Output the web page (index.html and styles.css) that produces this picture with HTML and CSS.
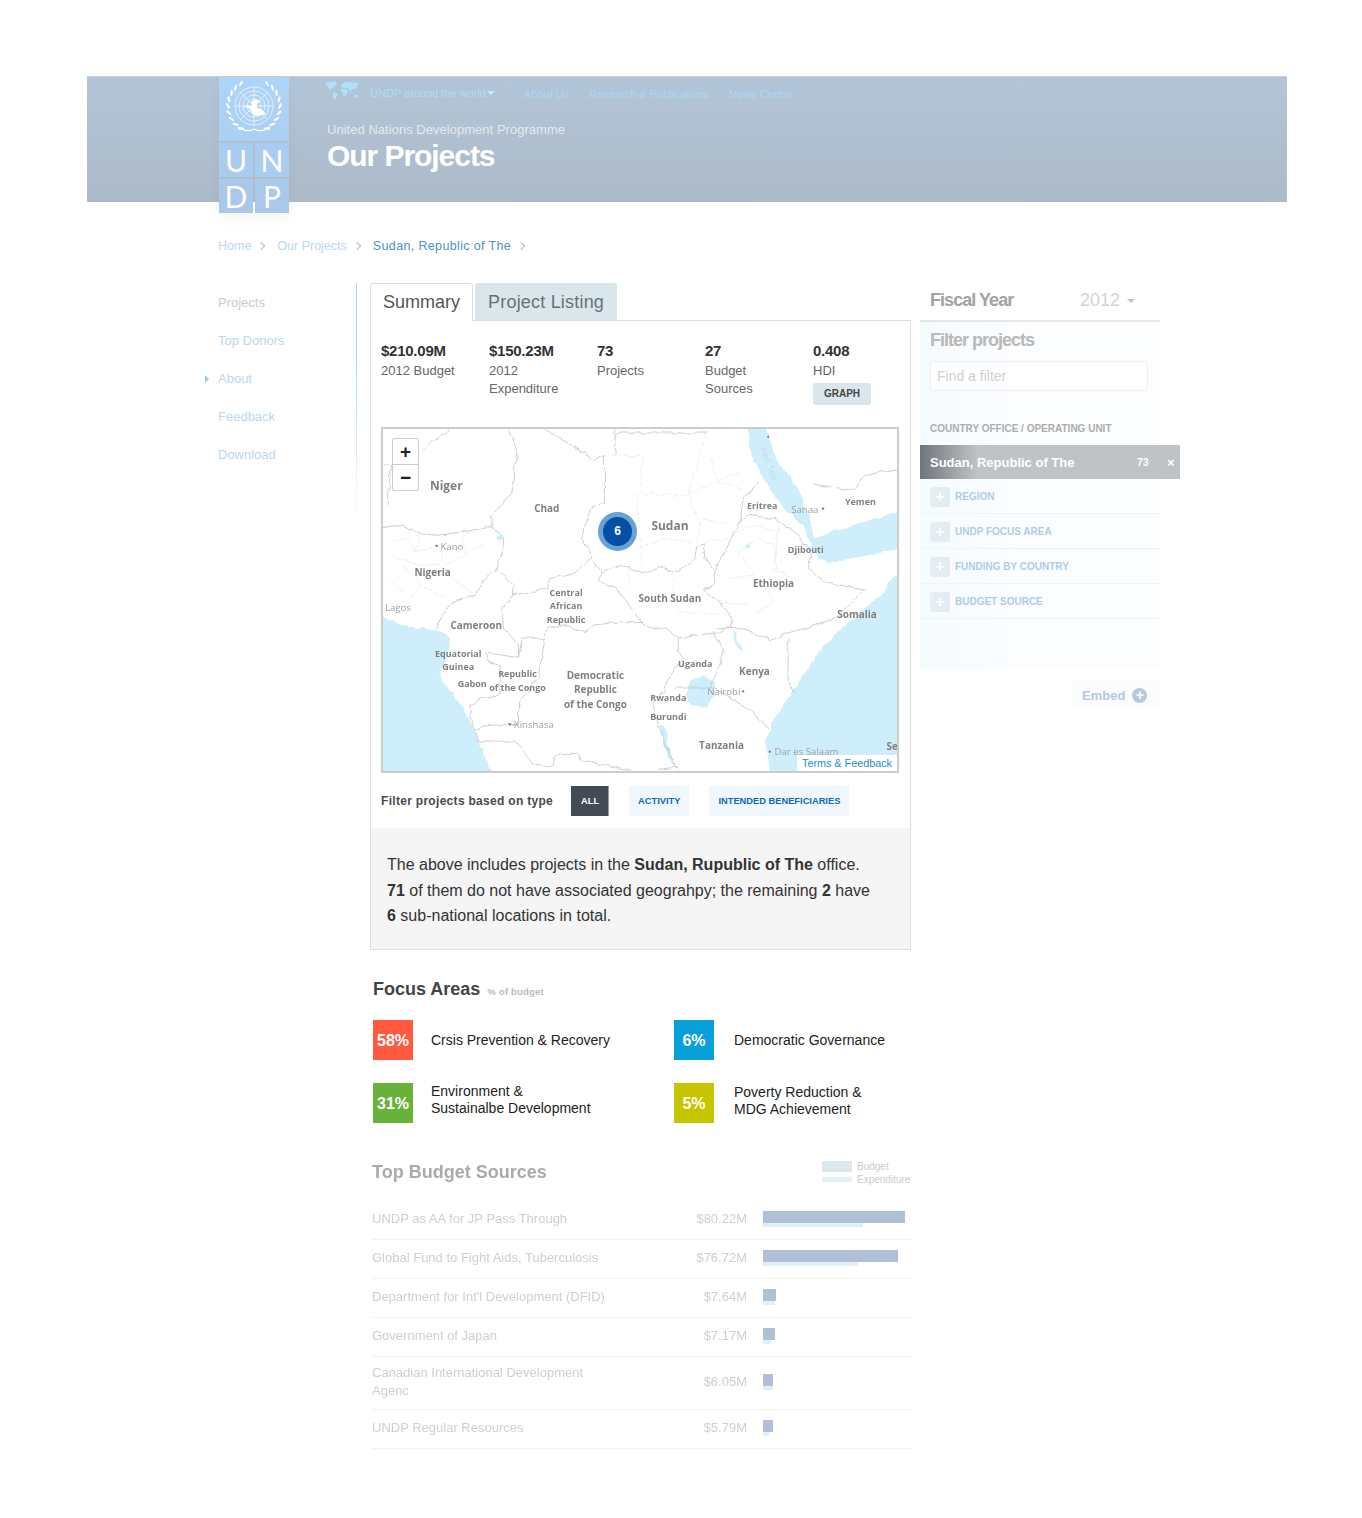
FILE: index.html
```html
<!DOCTYPE html>
<html lang="en">
<head>
<meta charset="utf-8">
<title>Our Projects</title>
<link rel="stylesheet" href="styles.css">
</head>
<body>
<div class="page">
<header class="site-header">
  <div class="logo">
    <div class="logo-emblem">
      <svg width="70" height="64" viewBox="0 0 70 64" fill="none" stroke="#fff">
        <g stroke-width=".75" opacity=".85">
          <circle cx="35" cy="29" r="19"/><circle cx="35" cy="29" r="15"/><circle cx="35" cy="29" r="11"/><circle cx="35" cy="29" r="7"/>
          <path d="M35 10V48M16 29H54M21.5 15.5L48.5 42.5M48.5 15.5L21.5 42.5"/>
        </g>
        <path d="M22 33L27 30L31 32L34 38L40 39L47 37L42 32L38 31L38 27L42 24L36 22L32 25L33 29L28 28Z" fill="#fff" stroke="none"/>
        <g fill="#fff" stroke="none">
          <ellipse cx="35" cy="3" rx="3.2" ry="1.2" transform="rotate(-150 35 29) rotate(-28 35 3)"/>
          <ellipse cx="35" cy="3" rx="3.2" ry="1.2" transform="rotate(-135 35 29) rotate(-28 35 3)"/>
          <ellipse cx="35" cy="3" rx="3.2" ry="1.2" transform="rotate(-120 35 29) rotate(-28 35 3)"/>
          <ellipse cx="35" cy="3" rx="3.2" ry="1.2" transform="rotate(-105 35 29) rotate(-28 35 3)"/>
          <ellipse cx="35" cy="3" rx="3.2" ry="1.2" transform="rotate(-90 35 29) rotate(-28 35 3)"/>
          <ellipse cx="35" cy="3" rx="3.2" ry="1.2" transform="rotate(-75 35 29) rotate(-28 35 3)"/>
          <ellipse cx="35" cy="3" rx="3.2" ry="1.2" transform="rotate(-60 35 29) rotate(-28 35 3)"/>
          <ellipse cx="35" cy="3" rx="3.2" ry="1.2" transform="rotate(-45 35 29) rotate(-28 35 3)"/>
          <ellipse cx="35" cy="3" rx="3" ry="1.1" transform="rotate(-30 35 29) rotate(-28 35 3)"/>
          <ellipse cx="35" cy="3" rx="3.2" ry="1.2" transform="rotate(150 35 29) rotate(28 35 3)"/>
          <ellipse cx="35" cy="3" rx="3.2" ry="1.2" transform="rotate(135 35 29) rotate(28 35 3)"/>
          <ellipse cx="35" cy="3" rx="3.2" ry="1.2" transform="rotate(120 35 29) rotate(28 35 3)"/>
          <ellipse cx="35" cy="3" rx="3.2" ry="1.2" transform="rotate(105 35 29) rotate(28 35 3)"/>
          <ellipse cx="35" cy="3" rx="3.2" ry="1.2" transform="rotate(90 35 29) rotate(28 35 3)"/>
          <ellipse cx="35" cy="3" rx="3.2" ry="1.2" transform="rotate(75 35 29) rotate(28 35 3)"/>
          <ellipse cx="35" cy="3" rx="3.2" ry="1.2" transform="rotate(60 35 29) rotate(28 35 3)"/>
          <ellipse cx="35" cy="3" rx="3.2" ry="1.2" transform="rotate(45 35 29) rotate(28 35 3)"/>
          <ellipse cx="35" cy="3" rx="3" ry="1.1" transform="rotate(30 35 29) rotate(28 35 3)"/>
        </g>
        <path d="M19 50Q28 56 35 52Q42 56 51 50" stroke-width="1.1"/>
      </svg>
    </div>
    <div class="logo-letters">
      <span class="logo-letter">U</span><span class="logo-letter">N</span><span class="logo-letter">D</span><span class="logo-letter">P</span>
    </div>
  </div>
  <div class="header-body">
    <nav class="top-nav">
      <svg class="world" width="34" height="20" viewBox="0 0 34 20" fill="#aee0f8">
        <path d="M0 2L10 0L12 3L8 7L5 8L6 11L3 6Z"/><path d="M8 11L13 13L10 19L8 18Z"/>
        <path d="M16 4L20 1L34 2L32 6L29 9L27 8L25 11L23 7L17 7Z"/><path d="M15 8L21 8L23 11L20 16L18 15L17 11Z"/>
        <path d="M29 14L33 14L32 17L29 16Z"/>
      </svg>
      <a class="nav-world">UNDP around the world<span class="nav-caret"></span></a>
      <a class="nav-link nav-first">About Us</a>
      <a class="nav-link">Research &amp; Publications</a>
      <a class="nav-link">News Centre</a>
    </nav>
    <div class="org-name">United Nations Development Programme</div>
    <h1 class="site-title">Our Projects</h1>
  </div>
</header>

<div class="breadcrumb">
  <a class="crumb">Home</a><span class="crumb-sep"></span>
  <a class="crumb">Our Projects</a><span class="crumb-sep"></span>
  <a class="crumb crumb-current">Sudan, Republic of The</a><span class="crumb-sep"></span>
</div>

<div class="layout">
  <aside class="side-nav">
    <a class="side-link side-gray">Projects</a>
    <a class="side-link">Top Donors</a>
    <a class="side-link side-arrow">About</a>
    <a class="side-link">Feedback</a>
    <a class="side-link">Download</a>
  </aside>

  <main class="main">
    <div class="tabs">
      <div class="tab tab-active">Summary</div>
      <div class="tab">Project Listing</div>
    </div>
    <section class="panel">
      <div class="stats">
        <div class="stat"><b>$210.09M</b><span>2012 Budget</span></div>
        <div class="stat"><b>$150.23M</b><span>2012<br>Expenditure</span></div>
        <div class="stat"><b>73</b><span>Projects</span></div>
        <div class="stat"><b>27</b><span>Budget<br>Sources</span></div>
        <div class="stat"><b>0.408</b><span>HDI</span><a class="graph-btn">GRAPH</a></div>
      </div>

      <div class="map">
        <svg class="map-svg" viewBox="3 10 1544 1030" preserveAspectRatio="none" fill="none">
          <defs>
            <filter id="wiggle" x="-5%" y="-5%" width="110%" height="110%">
              <feTurbulence type="fractalNoise" baseFrequency="0.035" numOctaves="2" seed="4" result="n"/>
              <feDisplacementMap in="SourceGraphic" in2="n" scale="16" xChannelSelector="R" yChannelSelector="G"/>
            </filter>
          </defs>
          <g fill="#cfeefc" filter="url(#wiggle)">
            <path d="M1560 425L1500 510L1440 560L1380 610L1320 670L1260 760L1225 810L1170 900L1150 960L1165 1050L1560 1050Z"/>
            <path d="M-10 570L60 600L110 610L160 610L205 640L195 700L170 760L230 830L270 900L290 950L330 1050L-10 1050Z"/>
            <path d="M1095 0L1150 0L1190 110L1250 190L1285 280L1300 340L1380 310L1480 280L1560 258L1560 370L1440 395L1340 412L1310 400L1290 365L1270 310L1200 240L1150 170L1110 90Z"/>
            <path d="M925 770L965 750L1000 770L1000 810L975 850L930 845L915 810Z"/>
            <path d="M1055 615L1065 625L1085 680L1070 670L1060 645Z"/>
            <path d="M835 905L850 905L860 960L880 1030L860 1000L845 950Z"/>
            <circle cx="1100" cy="362" r="9"/><circle cx="352" cy="335" r="8"/>
          </g>
          <g filter="url(#wiggle)">
            <g stroke="#e6e6e6" stroke-width="2" stroke-dasharray="14 5">
              <path d="M668 90L780 90L780 205L920 208L960 300L945 350"/>
              <path d="M765 205L782 420"/>
              <path d="M920 208L975 20"/>
              <path d="M1075 140L1000 170L925 205"/>
              <path d="M770 370L850 340L930 350"/>
              <path d="M735 430L745 490M870 440L880 510L960 540M890 560L1040 570"/>
            </g>
            <g stroke="#e9e9e9" stroke-width="2">
              <path d="M20 350L80 340L100 380L170 360L190 420L250 390L300 360M60 420L120 480L80 530M170 420L220 470L270 500M240 330L250 390M20 460L60 500M110 330L100 380M30 390L100 420L170 420M120 480L190 520"/>
              <path d="M1070 380L1130 340L1180 360L1190 440L1260 470M1040 460L1120 450L1180 530L1120 570M1190 290L1180 450M1010 530L1100 540M1060 320L1120 300L1190 320M1120 450L1070 380"/>
              <path d="M960 280L1040 300M985 100L1010 170L1085 190M970 350L1040 340"/>
            </g>
            <g stroke="#c2c2c2" stroke-width="2.4" stroke-linejoin="round">
              <path d="M120 70L205 10"/>
              <path d="M3 122L25 122L18 240"/>
              <path d="M380 10L405 75L390 200L330 270L330 305"/>
              <path d="M490 10L640 105L668 90L668 235L632 240L610 300L600 340L625 380L630 400L660 440L650 470L700 490L750 550L780 590"/>
              <path d="M700 10L700 88"/>
              <path d="M700 22L975 22"/>
              <path d="M3 310L60 300L110 325L170 330L240 320L330 305L360 330L365 375L345 430L300 470L280 510L210 530L175 580L165 610"/>
              <path d="M345 430L395 480L395 510L360 550L365 610L410 660L410 700"/>
              <path d="M395 510L500 490L505 460L570 445L630 400"/>
              <path d="M660 440L720 420L790 445L830 425L890 440L940 400L945 365L965 355L970 400L1000 440L995 480L965 490L1010 530L1050 580L1050 605L1000 610"/>
              <path d="M495 610L540 600L610 620L640 600L720 590L780 590L800 610L850 610L890 640L950 630L1000 625L1050 605"/>
              <path d="M890 640L890 680L905 700L855 770L850 800"/>
              <path d="M995 620L1025 680L1020 720L990 770L990 790"/>
              <path d="M880 790L1000 790L1110 860L1160 910"/>
              <path d="M1050 605L1100 620L1170 645L1220 625L1290 605L1370 575L1447 495"/>
              <path d="M1220 640L1220 770L1240 810"/>
              <path d="M1280 430L1330 470L1447 495"/>
              <path d="M1000 440L1050 340L1075 290L1085 220L1135 170"/>
              <path d="M1075 290L1100 270L1180 280L1240 320L1290 380L1280 430"/>
              <path d="M1295 175L1350 185L1420 195L1450 150L1547 130"/>
              <path d="M410 700L360 690L310 685"/>
              <path d="M420 640L490 640L495 610M420 640L410 700M490 640L470 750L440 800L410 830L410 900L360 900L300 905L280 920L290 950"/>
              <path d="M315 690L320 715L355 720L355 810L300 820L265 840L265 870L280 920"/>
              <path d="M290 950L400 950L460 1020L510 1025L520 990L590 990L600 1010L660 1020L750 1038"/>
              <path d="M850 800L810 830L830 900L850 960L890 1040"/>
              <path d="M830 1035L890 1028"/>
            </g>
          </g>
          <g class="map-places">
            <text x="1270" y="262">Sanaa</text><text x="210" y="375">Kano</text><text x="48" y="557">Lagos</text>
            <text x="1027" y="810">Nairobi</text><text x="456" y="910">Kinshasa</text><text x="1275" y="992">Dar es Salaam</text>
          </g>
          <g fill="#777"><circle cx="1325" cy="250" r="3.5"/><circle cx="164" cy="362" r="3.5"/><circle cx="1085" cy="800" r="3.5"/><circle cx="384" cy="900" r="3.5"/><circle cx="1165" cy="982" r="3.5"/><circle cx="1160" cy="33" r="3"/></g>
          <text class="map-sea" transform="translate(1135 70) rotate(68)">Red Sea</text>
          <g class="map-labels">
            <text class="lg" x="193" y="193">Niger</text><text class="md" x="495" y="260">Chad</text><text class="lg" x="865" y="315">Sudan</text>
            <text x="1142" y="250">Eritrea</text><text x="1437" y="240">Yemen</text><text x="1273" y="382">Djibouti</text>
            <text class="md" x="152" y="453">Nigeria</text><text class="md" x="1176" y="485">Ethiopia</text>
            <text x="553" y="512">Central</text><text x="553" y="553">African</text><text x="553" y="593">Republic</text>
            <text class="md" x="865" y="530">South Sudan</text><text class="md" x="283" y="611">Cameroon</text><text class="md" x="1427" y="578">Somalia</text>
            <text x="229" y="696">Equatorial</text><text x="229" y="736">Guinea</text>
            <text x="407" y="758">Republic</text><text x="407" y="799">of the Congo</text><text x="271" y="788">Gabon</text>
            <text class="md" x="641" y="763">Democratic</text><text class="md" x="641" y="806">Republic</text><text class="md" x="641" y="850">of the Congo</text>
            <text x="941" y="727">Uganda</text><text class="md" x="1119" y="750">Kenya</text><text x="860" y="830">Rwanda</text><text x="860" y="885">Burundi</text>
            <text class="md" x="1020" y="973">Tanzania</text><text class="md" x="1533" y="976">Se</text>
          </g>
        </svg>
        <div class="zoom-ctl"><span class="zoom-btn">+</span><span class="zoom-btn">−</span></div>
        <div class="cluster"><span class="cluster-core">6</span></div>
        <a class="map-terms">Terms &amp; Feedback</a>
      </div>

      <div class="type-filter">
        <span class="type-label">Filter projects based on type</span>
        <a class="type-btn type-active">ALL</a>
        <a class="type-btn">ACTIVITY</a>
        <a class="type-btn">INTENDED BENEFICIARIES</a>
      </div>

      <div class="note">
        The above includes projects in the <b>Sudan, Rupublic of The</b> office.<br>
        <b>71</b> of them do not have associated geograhpy; the remaining <b>2</b> have<br>
        <b>6</b> sub-national locations in total.
      </div>
    </section>

    <section class="focus">
      <h2 class="focus-title">Focus Areas <small>% of budget</small></h2>
      <div class="focus-grid">
        <div class="focus-item"><span class="tile tile-red">58%</span><span class="focus-name focus-one">Crsis Prevention &amp; Recovery</span></div>
        <div class="focus-item focus-right"><span class="tile tile-blue">6%</span><span class="focus-name">Democratic Governance</span></div>
        <div class="focus-item"><span class="tile tile-green">31%</span><span class="focus-name focus-two">Environment &amp;<br>Sustainalbe Development</span></div>
        <div class="focus-item focus-right"><span class="tile tile-yellow">5%</span><span class="focus-name focus-two">Poverty Reduction &amp;<br>MDG Achievement</span></div>
      </div>
    </section>

    <section class="sources">
      <div class="sources-head">
        <h2 class="sources-title">Top Budget Sources</h2>
        <div class="legend">
          <div class="legend-row"><span class="swatch swatch-budget"></span>Budget</div>
          <div class="legend-row"><span class="swatch swatch-exp"></span>Expenditure</div>
        </div>
      </div>
      <div class="source-row"><span class="source-name">UNDP as AA for JP Pass Through</span><span class="source-amt">$80.22M</span><span class="bars"><i class="bar-b" style="width:142px"></i><i class="bar-e" style="width:100px"></i></span></div>
      <div class="source-row"><span class="source-name">Global Fund to Fight Aids, Tuberculosis</span><span class="source-amt">$76.72M</span><span class="bars"><i class="bar-b" style="width:135px"></i><i class="bar-e" style="width:95px"></i></span></div>
      <div class="source-row"><span class="source-name">Department for Int'l Development (DFID)</span><span class="source-amt">$7.64M</span><span class="bars"><i class="bar-b" style="width:13px"></i><i class="bar-e" style="width:12px"></i></span></div>
      <div class="source-row"><span class="source-name">Government of Japan</span><span class="source-amt">$7.17M</span><span class="bars"><i class="bar-b" style="width:12px"></i><i class="bar-e" style="width:8px"></i></span></div>
      <div class="source-row source-tall"><span class="source-name">Canadian International Development Agenc</span><span class="source-amt">$6.05M</span><span class="bars"><i class="bar-b" style="width:10px"></i><i class="bar-e" style="width:10px"></i></span></div>
      <div class="source-row"><span class="source-name">UNDP Regular Resources</span><span class="source-amt">$5.79M</span><span class="bars"><i class="bar-b" style="width:10px"></i><i class="bar-e" style="width:6px"></i></span></div>
    </section>
  </main>

  <aside class="filters">
    <div class="fiscal"><span class="fiscal-label">Fiscal Year</span><span class="fiscal-year">2012</span><span class="fiscal-caret"></span></div>
    <div class="filter-panel">
      <h3 class="filter-title">Filter projects</h3>
      <div class="filter-input">Find a filter</div>
      <div class="filter-label">COUNTRY OFFICE / OPERATING UNIT</div>
      <div class="filter-selected"><span class="sel-name">Sudan, Republic of The</span><span class="sel-count">73</span><span class="sel-x">×</span></div>
      <div class="filter-row"><span class="plus">+</span>REGION</div>
      <div class="filter-row"><span class="plus">+</span>UNDP FOCUS AREA</div>
      <div class="filter-row"><span class="plus">+</span>FUNDING BY COUNTRY</div>
      <div class="filter-row"><span class="plus">+</span>BUDGET SOURCE</div>
    </div>
    <div class="embed-wrap"><a class="embed">Embed<span class="embed-plus">+</span></a></div>
  </aside>
</div>
</div>
</body>
</html>
```

FILE: styles.css
```css
* { box-sizing: border-box; }
html, body { margin: 0; padding: 0; background: #fff; }
body { font-family: "Liberation Sans", Arial, sans-serif; color: #333; }
h1, h2, h3 { margin: 0; }
a { text-decoration: none; }
.page { min-height: 1518px; padding-top: 76px; overflow: hidden; }

/* header */
.site-header {
  display: flex; width: 1200px; height: 126px; margin-left: 87px; padding-left: 132px;
  border-top: 1px solid #cfcfcf;
  background: linear-gradient(#b2c5d8, #adbac8);
}
.logo { width: 70px; height: 136px; flex: none; box-shadow: 0 6px 14px rgba(0,0,0,.04); position: relative; }
.logo-emblem { height: 64px; background: linear-gradient(#aed4f7, #abd0f3); }
.logo-letters { display: grid; grid-template-columns: 34px 34px; gap: 2px; margin-top: 2px; }
.logo-letter {
  height: 34px; background: #a9cdf0; color: #fff; text-align: center;
  font: 400 30px/35px Lato, sans-serif;
}
.logo-letter:nth-child(n+3) { background: #a9c8ea; }
.header-body { margin-left: 38px; flex: 1; }
.top-nav { display: flex; align-items: center; height: 30px; margin-top: 2px; font-size: 11px; }
.world { margin: -6px 11px 0 -2px; }
.nav-world { color: #aedcf4; margin-top: -3px; }
.nav-caret { display: inline-block; margin-left: 1px; vertical-align: 2px; border: 4px solid transparent; border-top-color: #cbe8f8; border-bottom: 0; }
.nav-link { color: #aad8f5; margin-left: 20px; }
.nav-first { margin-left: 29px; }
.org-name { margin-top: 13px; font-size: 13px; line-height: 16px; letter-spacing: .03px; color: #e4eaf0; }
.site-title { margin-top: 0; font-size: 30px; line-height: 36px; font-weight: 700; letter-spacing: -1.05px; color: #fff; }

/* breadcrumb */
.breadcrumb { display: flex; align-items: center; height: 16px; margin: 36px 0 0 218px; font-size: 12.5px; }
.crumb { color: #bbd6ee; }
.crumb-current { color: #4f90c8; letter-spacing: .36px; }
.crumb-sep { width: 6px; height: 6px; margin: 0 13px 0 7px; border-top: 1px solid #bbb; border-right: 1px solid #bbb; transform: rotate(45deg); }

/* layout */
.layout { display: flex; align-items: flex-start; margin: 29px 0 0 218px; }
.side-nav {
  flex: none; width: 139px; height: 237px; padding-top: 1px; font-size: 13px;
  border-right: 1px solid; border-image: linear-gradient(#a3d7fb 30%, #fff) 1;
}
.side-link { display: block; height: 38px; line-height: 37px; color: #bcd6ec; position: relative; }
.side-gray { color: #c3ccd6; }
.side-arrow::before { content: ""; position: absolute; left: -13px; top: 15px; border: 4px solid transparent; border-left-color: #a9c7e2; border-right: 0; }

.main { flex: none; width: 541px; margin-left: 13px; margin-right: 9px; }

/* tabs */
.tabs { display: flex; gap: 2px; height: 38px; margin-bottom: -1px; position: relative; }
.tab { height: 38px; padding: 0 13px; font-size: 18px; letter-spacing: .2px; line-height: 38px; color: #6a7074; background: #d9e7ec; border-radius: 3px 3px 0 0; }
.tab-active { letter-spacing: 0; color: #555; background: #fff; border: 1px solid #ddd; border-bottom: 0; line-height: 36px; padding: 0 12px; }
.panel { border: 1px solid #ddd; }
.tab-active + .tab { margin-bottom: 1px; height: 37px; }

.stats { display: grid; grid-template-columns: repeat(5, 108px); padding: 21px 10px 22px; }
.stat b { display: block; font-size: 15px; line-height: 18px; letter-spacing: -.25px; color: #333; margin-bottom: 2px; }
.stat span { display: block; font-size: 13px; line-height: 18px; color: #666; }
.graph-btn { display: block; width: 58px; height: 22px; margin-top: 3px; border-radius: 3px; background: #d9e7ec; color: #444; font-size: 10px; font-weight: 700; line-height: 22px; text-align: center; }

/* map */
.map { position: relative; width: 518px; height: 346px; margin-left: 10px; border: 2px solid #ccc; background: #fff; overflow: hidden; }
.map-svg { display: block; width: 100%; height: 100%; filter: blur(.35px); }
.map-labels text { font: 700 27px "Open Sans", sans-serif; fill: #808080; text-anchor: middle; }
.map-labels .md { font-size: 30px; }
.map-labels .lg { font-size: 36px; }
.map-places text { font: 400 29px "Open Sans", sans-serif; fill: #a0a0a0; text-anchor: middle; }
.map-sea { font: 400 28px "Open Sans", sans-serif; fill: #c3dbe5; }
.zoom-ctl { position: absolute; left: 9px; top: 9px; width: 27px; height: 53px; display: flex; flex-direction: column; background: #fff; border: 1px solid #ccc; border-radius: 2px; }
.zoom-btn { flex: 1; text-align: center; font: 700 19px/25px "Liberation Sans", sans-serif; color: #222; }
.zoom-btn + .zoom-btn { border-top: 1px solid #ccc; }
.cluster { position: absolute; left: 215px; top: 83px; width: 39px; height: 39px; border-radius: 50%; background: #6aa2d3; display: flex; align-items: center; justify-content: center; }
.cluster-core { width: 29px; height: 29px; border-radius: 50%; background: #0450a4; color: #fff; font-size: 12px; font-weight: 700; line-height: 29px; text-align: center; }
.map-terms { position: absolute; right: 0; bottom: 0; width: 100px; height: 16px; background: #fff; color: #1e8fbe; font-size: 10.8px; line-height: 17px; text-align: center; }

/* type filter */
.type-filter { display: flex; align-items: center; height: 30px; margin: 13px 0 12px 10px; }
.type-label { width: 190px; font-size: 12px; font-weight: 700; color: #4a4a4a; letter-spacing: .3px; }
.type-btn { height: 30px; margin-right: 20px; padding: 0 9px; background: #f0f8fd; color: #0f68b4; font-size: 9.3px; font-weight: 700; line-height: 30px; }
.type-active { background: #434c54; color: #fff; border-right: 1px solid #999; padding: 0 9px 0 10px; }

.note { padding: 24px 16px 20px; background: #f5f5f5; font-size: 16px; line-height: 25.5px; color: #333; }

/* focus */
.focus { padding-left: 3px; }
.focus-title { margin-top: 28px; font-size: 18px; line-height: 22px; color: #444; }
.focus-title small { margin-left: 2px; font-size: 9.5px; line-height: 1; font-weight: 700; color: #bbb; letter-spacing: .2px; }
.focus-grid { display: grid; grid-template-columns: 301px 1fr; row-gap: 23px; margin-top: 20px; }
.focus-item { display: flex; align-items: center; gap: 18px; height: 40px; }
.focus-right { gap: 20px; }
.focus-right .focus-name, .focus-one { padding-top: 2px; }
.tile { flex: none; width: 40px; height: 40px; color: #fff; font-size: 16px; font-weight: 700; line-height: 41px; text-align: center; }
.tile-red { background: #ff5a40; }
.tile-blue { background: #08a0d9; }
.tile-green { background: #69b23a; }
.tile-yellow { background: #c6c500; }
.focus-name { font-size: 14px; line-height: 17px; color: #222; }
.focus-two { margin-bottom: 5px; }

/* sources */
.sources { width: 540px; margin-left: 2px; }
.sources-head { display: flex; justify-content: space-between; margin-top: 38px; height: 22px; margin-bottom: 18px; }
.sources-title { font-size: 18px; line-height: 22px; color: #aaa; filter: blur(.35px); }
.legend { width: 90px; font-size: 10px; color: #ccc; }
.legend-row { display: flex; align-items: center; gap: 5px; height: 11px; }
.legend-row + .legend-row { margin-top: 5px; height: 6px; }
.swatch { width: 30px; }
.swatch-budget { height: 11px; background: #dbe8ee; }
.swatch-exp { height: 5px; background: #e8f1f5; }
.source-row { display: flex; align-items: center; height: 39px; padding-bottom: 2px; border-bottom: 1px solid #f3f3f3; font-size: 13px; color: #cfcfcf; filter: blur(.3px); }
.source-tall { height: 53px; }
.source-name { width: 240px; line-height: 18px; }
.source-amt { width: 135px; text-align: right; }
.bars { display: block; margin-left: 16px; }
.bar-b { display: block; height: 12px; background: #afc0d7; }
.bar-e { display: block; height: 4px; background: #dff0f8; }

/* filters */
.filters { flex: none; width: 240px; }
.fiscal { display: flex; align-items: center; height: 39px; padding: 0 0 2px 10px; border-bottom: 2px solid #e6e6e6; }
.fiscal-label { width: 150px; font-size: 18px; font-weight: 700; letter-spacing: -.95px; color: #a3a3a3; }
.fiscal-year { font-size: 18px; color: #d4d4d4; }
.fiscal-caret { margin-left: 7px; border: 4px solid transparent; border-top-color: #bcc8d4; border-bottom: 0; }
.filter-panel { height: 347px; background: linear-gradient(90deg, #f6fbfe, #fbfdff 40%); }
.filter-title { padding: 8px 0 0 10px; font-size: 18px; line-height: 20px; letter-spacing: -1px; color: #b8b8b8; }
.filter-input { width: 218px; height: 30px; margin: 11px 0 0 10px; padding-left: 6px; background: #fff; border: 1px solid #eceff1; border-radius: 3px; font-size: 14px; line-height: 28px; color: #cfcfcf; }
.filter-label { margin: 31px 0 0 10px; font-size: 10px; font-weight: 700; line-height: 13px; color: #adadad; }
.filter-selected { display: flex; align-items: center; width: 260px; height: 34px; margin-top: 10px; padding-left: 10px; background: linear-gradient(90deg, #6f757b, #bfc3c6 22%); color: #fff; font-weight: 700; position: relative; }
.sel-name { width: 207px; font-size: 13px; }
.sel-count { width: 30px; font-size: 10.5px; }
.sel-x { font-size: 13px; }
.filter-row { display: flex; align-items: center; gap: 5px; height: 35px; padding: 1px 0 0 10px; border-bottom: 1px solid #edf5f8; font-size: 10px; font-weight: 700; color: #aecce8; }
.plus { width: 20px; height: 20px; border-radius: 3px; background: linear-gradient(90deg, #e6eff3, #e0ecf1); color: #fff; font-size: 16px; line-height: 19px; text-align: center; }
.embed-wrap { display: flex; justify-content: flex-end; margin-top: 11px; }
.embed { display: flex; align-items: center; width: 88px; height: 30px; padding-left: 10px; background: #fafcfe; font-size: 13px; font-weight: 700; color: #b9c8d8; }
.embed-plus { width: 15px; height: 15px; margin-left: 7px; border-radius: 50%; background: #b6c8dc; color: #fff; font-size: 14px; line-height: 14px; text-align: center; }
```
